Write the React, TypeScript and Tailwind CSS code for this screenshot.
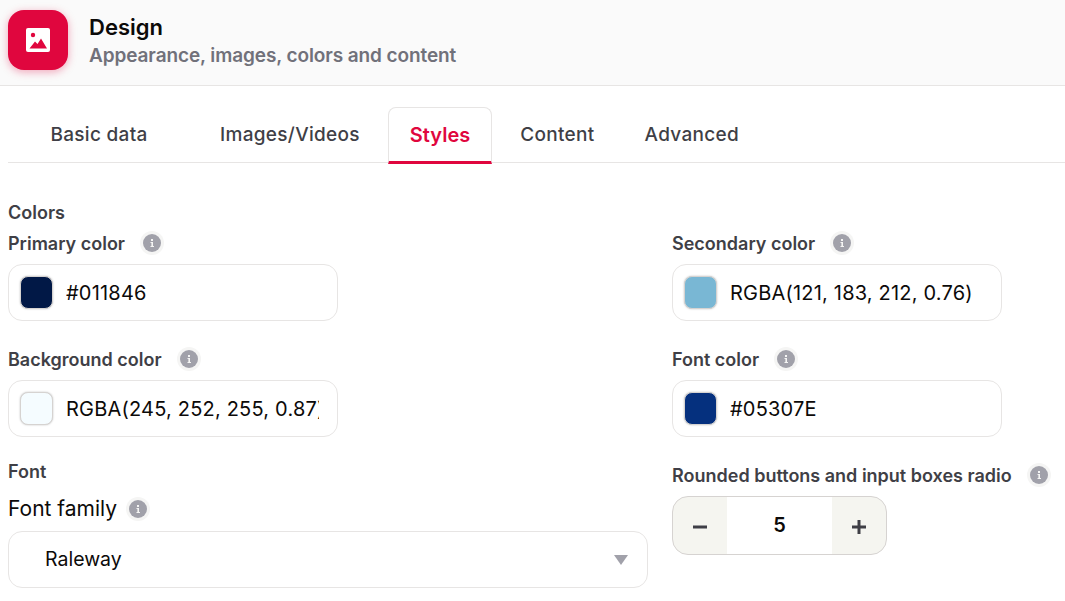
const TABS = ['Basic data', 'Images/Videos', 'Styles', 'Content', 'Advanced'];

function InfoDot() {
  return (
    <span className="flex h-[18px] w-[18px] shrink-0 items-center justify-center rounded-full bg-[#a1a1aa] ring-[3px] ring-[#f5f5f4]">
      <svg viewBox="0 0 10 10" className="h-[10px] w-[10px]" fill="#f5f5f4">
        <rect x="4" y="1" width="2" height="2" />
        <path d="M3.5 4H6v4h1v1H3.5V8H4.4V5H3.5z" />
      </svg>
    </span>
  );
}

function FieldLabel({ text }: { text: string }) {
  return (
    <div className="flex h-[24px] items-center gap-[18px]">
      <span className="pt-[1px] text-[18px] font-semibold leading-6 text-[#3f3f46]">{text}</span>
      <InfoDot />
    </div>
  );
}

function ColorField({ label, value, swatch }: { label: string; value: string; swatch: string }) {
  return (
    <div className="flex flex-col gap-[9px]">
      <FieldLabel text={label} />
      <div className="flex h-[57px] w-[330px] items-center gap-[13px] rounded-[14px] border border-[#e7e5e4] bg-white pl-[11px] pr-[18px]">
        <span className={`h-[33px] w-[33px] shrink-0 rounded-[8px] border border-[#d6d3d1] shadow-[0_0_2px_rgba(0,0,0,0.25)] ${swatch}`} />
        <span className="overflow-hidden whitespace-nowrap text-[20px] tracking-[0.2px] text-[#0c0a09]">{value}</span>
      </div>
    </div>
  );
}

export default function App() {
  return (
    <div className="h-[601px] w-[1065px] overflow-hidden bg-white font-['Inter',sans-serif]">
      <header className="flex h-[86px] items-start gap-[21px] border-b border-[#e7e5e4] bg-[#fafafa] pl-[8px] pt-[10px]">
        <div className="flex h-[60px] w-[60px] items-center justify-center rounded-[16px] bg-[#e0063e] shadow-[0_2px_8px_rgba(224,6,62,0.35)]">
          <svg viewBox="0 0 24 24" className="h-[24px] w-[24px]">
            <rect x="0" y="0" width="24" height="24" rx="2" fill="#fff" />
            <circle cx="7" cy="7" r="2.2" fill="#e0063e" />
            <path d="M3.5 20.5 9 13.5l2.5 2.5 3.500-5.500 6 10z" fill="#e0063e" />
          </svg>
        </div>
        <div className="flex flex-col">
          <h1 className="mt-[2px] text-[22px] font-semibold leading-[30px] text-[#0c0a09]">Design</h1>
          <p className="text-[19px] font-semibold leading-[28px] tracking-[-0.1px] text-[#71717a]">Appearance, images, colors and content</p>
        </div>
      </header>

      <div className="pl-[8px]">
        <nav className="mt-[21px] flex h-[56px] gap-[6px] border-b border-[#e7e5e4]">
          {TABS.map((tab, i) => (
            <button
              key={tab}
              className={
                tab === 'Styles'
                  ? 'h-[57px] rounded-t-[8px] border border-b-[3px] border-[#e7e5e4] border-b-[#e0063e] bg-white px-[21px] text-[20px] font-semibold text-[#e0063e]'
                  : `h-[56px] text-center text-[19px] font-medium tracking-[0.3px] text-[#3f3f46] ${i === 0 ? 'mr-[2px] w-[182px]' : 'px-[22px]'}`
              }
            >
              {tab}
            </button>
          ))}
        </nav>

        <div className="mt-[37px] grid grid-cols-[640px_1fr] gap-x-[24px]">
          <div className="col-span-2 mb-[6px] pt-[1px] text-[18px] font-semibold leading-6 text-[#3f3f46]">Colors</div>
          <ColorField label="Primary color" value="#011846" swatch="bg-[#011846]" />
          <ColorField label="Secondary color" value="RGBA(121, 183, 212, 0.76)" swatch="bg-[#79b7d4]" />
          <div className="mt-[26px]">
            <ColorField label="Background color" value="RGBA(245, 252, 255, 0.87)" swatch="bg-[#f5fcff]" />
          </div>
          <div className="mt-[26px]">
            <ColorField label="Font color" value="#05307E" swatch="bg-[#05307e]" />
          </div>

          <div className="mt-[23px]">
            <div className="text-[18px] font-semibold leading-6 text-[#3f3f46]">Font</div>
            <div className="mt-[11px] flex h-[28px] items-center gap-[12px]">
              <span className="text-[21px] leading-7 text-[#0c0a09]">Font family</span>
              <InfoDot />
            </div>
            <div className="mt-[8px] flex h-[57px] items-center justify-between rounded-[14px] border border-[#e7e5e4] bg-white pl-[36px] pr-[19px]">
              <span className="text-[19.5px] text-[#0c0a09]">Raleway</span>
              <svg viewBox="0 0 14 10" className="h-[10px] w-[14px]" fill="#a1a1aa">
                <path d="M0 0h14L7 10z" />
              </svg>
            </div>
          </div>

          <div className="mt-[26px]">
            <FieldLabel text="Rounded buttons and input boxes radio" />
            <div className="mt-[9px] flex h-[59px] w-[215px] overflow-hidden rounded-[16px] border border-[#d6d3d1] bg-[#f5f5f0]">
              <span className="flex w-[54px] items-center justify-center pt-[2px] text-[#3f3f46]">
                <svg viewBox="0 0 14 14" className="h-[14px] w-[14px]" fill="currentColor"><rect x="0" y="5.500" width="14" height="3" /></svg>
              </span>
              <span className="flex w-[105px] items-center justify-center bg-white pb-[2px] text-[20px] font-semibold text-[#0c0a09]">5</span>
              <span className="flex flex-1 items-center justify-center pt-[2px] text-[#3f3f46]">
                <svg viewBox="0 0 14 14" className="h-[14px] w-[14px]" fill="currentColor"><path d="M5.500 0h3v5.500H14v3H8.500V14h-3V8.500H0v-3h5.500z" /></svg>
              </span>
            </div>
          </div>
        </div>
      </div>
    </div>
  );
}
